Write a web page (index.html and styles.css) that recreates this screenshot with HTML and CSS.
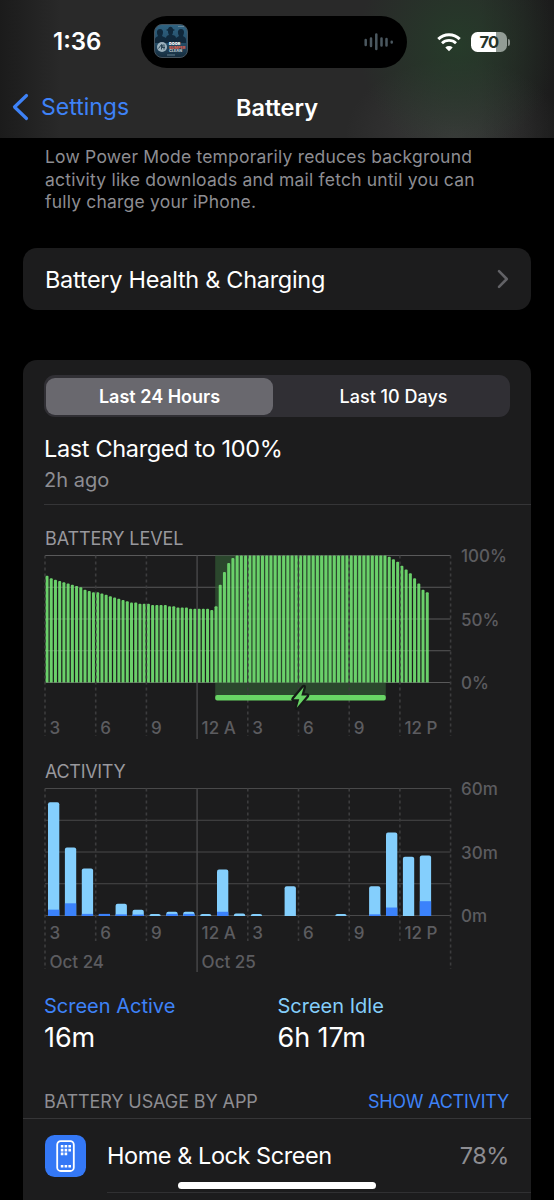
FILE: index.html
```html
<!DOCTYPE html>
<html lang="en">

<head>
    <meta charset="UTF-8">
    <meta name="viewport" content="width=device-width, initial-scale=1.0">
    <title>Battery</title>
    <link rel="stylesheet" href="styles.css">
</head>

<body>
    <div class="phone">
        <header class="header">
            <div class="status-bar">
                <div class="time">1:36</div>
                <div class="island">
                    <svg class="artwork" width="34" height="34" viewBox="0 0 34 34">
                        <defs>
                            <linearGradient id="art" x1="0" y1="0" x2="0" y2="1">
                                <stop offset="0" stop-color="#2f6382" />
                                <stop offset="0.6" stop-color="#244b65" />
                                <stop offset="1" stop-color="#152b3c" />
                            </linearGradient>
                        </defs>
                        <rect x="0.5" y="0.5" width="33" height="33" rx="7.5" fill="url(#art)" stroke="#45525c" />
                        <path d="M1 16c0-3 2-3 3-4-2-4-1-7 2-7s4 3 2 7c1 1 3 1 4 2 0-2 2-3 3-3-1-2-1-3-1-4l-2-1 2-1c1-3 4-3 5 0l2 1-2 1c0 1 0 3-1 4 2 0 4 1 4 3 1-1 2-1 3-2-2-4-1-7 2-7s4 3 2 7c1 1 3 1 3 4v3H1z" fill="#10283b" />
                        <circle cx="8" cy="23" r="5" fill="#9cb1bd" />
                        <path d="M4.500 24.500l3-4v5m1.500-5l-1 3h3m-1-3v5" fill="none" stroke="#2b4657" />
                        <text x="15" y="21.300" class="art-text" fill="#fff">DOOR</text>
                        <text x="15" y="24.600" class="art-text" fill="#d8604f">BUMPER</text>
                        <text x="15" y="27.800" class="art-text" fill="#aebdc6">CLEAN</text>
                        <path d="M24 2.500h6M13 31h8" stroke="#75909f" stroke-width="0.800" />
                    </svg>
                    <svg class="wave" width="30" height="18" viewBox="0 0 30 18">
                        <path d="M1.700 7v5M7 5.500v7.500M12.300 1.500v14.500M17.500 5.500v7M22.500 6v6.500M27.700 8.800v.6" stroke="#4b5860" stroke-width="2.500" stroke-linecap="round" />
                    </svg>
                </div>
                <div class="indicators">
                    <svg width="24" height="19" viewBox="0 0 24 19">
                        <path d="M1.300 6.100a15.300 15.300 0 0 1 21.400 0" fill="none" stroke="#fff" stroke-width="3" />
                        <path d="M5 10.200a10 10 0 0 1 14 0" fill="none" stroke="#fff" stroke-width="2.800" />
                        <path d="M12 18.300l-3.700-3.900a5.400 5.400 0 0 1 7.400 0z" fill="#fff" />
                    </svg>
                    <div class="battery"><span>70</span></div>
                    <div class="battery-cap"></div>
                </div>
            </div>
            <div class="nav-bar">
                <a class="back">
                    <svg width="18" height="28" viewBox="0 0 18 28">
                        <path d="M14.500 2.500L2.500 14l12 11.500" fill="none" stroke="#3e82f7" stroke-width="3.200" stroke-linecap="round" stroke-linejoin="round" />
                    </svg>
                    <span>Settings</span>
                </a>
                <h1>Battery</h1>
            </div>
        </header>

        <p class="footnote">Low Power Mode temporarily reduces background<br>activity like downloads and mail fetch until you can<br>fully charge your iPhone.</p>

        <div class="card health">
            <span>Battery Health &amp; Charging</span>
            <svg width="12" height="20" viewBox="0 0 12 20">
                <path d="M2 2.200l7.800 7.800L2 17.800" fill="none" stroke="#626266" stroke-width="2.600" stroke-linecap="round" stroke-linejoin="round" />
            </svg>
        </div>

        <div class="card usage">
            <div class="segmented">
                <div class="segment selected"><span>Last 24 Hours</span></div>
                <div class="segment"><span>Last 10 Days</span></div>
            </div>
            <div class="charged">
                <div class="charged-title">Last Charged to 100%</div>
                <div class="charged-sub">2h ago</div>
            </div>

            <h2 class="level-title">BATTERY LEVEL</h2>
            <svg id="levelChart" class="chart" width="486" height="194" viewBox="0 0 486 194"></svg>

            <h2 class="activity-title">ACTIVITY</h2>
            <svg id="activityChart" class="chart" width="486" height="194" viewBox="0 0 486 194"></svg>

            <div class="totals">
                <div class="total">
                    <div class="label active">Screen Active</div>
                    <div class="value">16m</div>
                </div>
                <div class="total">
                    <div class="label idle">Screen Idle</div>
                    <div class="value">6h 17m</div>
                </div>
            </div>

            <div class="list-head">
                <span>BATTERY USAGE BY APP</span>
                <a>SHOW ACTIVITY</a>
            </div>
            <div class="app">
                <svg width="41" height="42" viewBox="0 0 41 42">
                    <rect width="41" height="42" rx="9.500" fill="#3478f6" />
                    <rect x="12.200" y="6.200" width="16.600" height="29.800" rx="3.500" fill="none" stroke="#fff" stroke-width="1.800" />
                    <path d="M15.800 11.300h10.500M15.800 15.100h10.500M15.800 18.900h7M15.800 31.300h10.500" stroke="#fff" stroke-width="2.600" stroke-dasharray="2.600 1.200" />
                </svg>
                <div class="app-row">
                    <span class="app-name">Home &amp; Lock Screen</span>
                    <span class="app-percent">78%</span>
                </div>
            </div>
        </div>
        <div class="home-indicator"></div>
    </div>

    <script src="script.js"></script>
</body>

</html>
```
FILE: styles.css
```css
* {
    box-sizing: border-box;
}

body {
    margin: 0;
    background: #000;
    color: #fff;
    font-family: Inter, "Liberation Sans", sans-serif;
}

.phone {
    position: relative;
    width: 554px;
    height: 1200px;
    overflow: hidden;
}

.header {
    height: 138px;
    background:
        radial-gradient(ellipse 100px 110px at 458px 45px, rgba(37, 65, 42, 0.75), rgba(37, 65, 42, 0) 100%),
        radial-gradient(ellipse 110px 80px at 455px 138px, rgba(75, 75, 75, 0.5), rgba(75, 75, 75, 0) 100%),
        linear-gradient(90deg, #1b1b1b, #292929 60px, #292929 480px, #1b1b1b);
}

.status-bar {
    display: flex;
    padding-top: 16px;
    height: 77px;
}

.time {
    width: 141px;
    padding-left: 53px;
    font-size: 24px;
    font-weight: 600;
    line-height: 52px;
    letter-spacing: 0;
}

.island {
    display: flex;
    align-items: center;
    justify-content: space-between;
    width: 266px;
    height: 52px;
    padding: 0 13px;
    border-radius: 26px;
    background: #000;
}

.artwork {
    margin-top: -2px;
}

.art-text {
    font-size: 3.8px;
    font-weight: 900;
}

.indicators {
    display: flex;
    align-items: center;
    height: 52px;
    padding-left: 30px;
}

.battery {
    width: 36px;
    height: 20px;
    margin-left: 10px;
    border-radius: 6.5px;
    background: linear-gradient(90deg, #fff 70%, #929c95 70%);
    color: #26332a;
    font-size: 16.5px;
    font-weight: 700;
    line-height: 20px;
    text-align: center;
    letter-spacing: -0.8px;
}

.battery-cap {
    width: 2px;
    height: 7px;
    margin-left: 1px;
    border-radius: 0 2px 2px 0;
    background: #8a918c;
}

.nav-bar {
    display: grid;
    grid-template-columns: 1fr 140px 1fr;
    align-items: center;
    height: 60px;
}

.back {
    display: flex;
    align-items: center;
    gap: 11px;
    padding-left: 12px;
    color: #3e82f7;
    font-size: 23px;
    letter-spacing: 0;
}

h1 {
    margin: 0;
    font-size: 23.5px;
    font-weight: 600;
    text-align: center;
    letter-spacing: 0;
}

.footnote {
    height: 67px;
    margin: 8px 0 35px;
    padding-left: 45px;
    color: #8d8d92;
    font-size: 17.5px;
    line-height: 22.7px;
    letter-spacing: 0.2px;
}

.card {
    margin-left: 23px;
    width: 508px;
    background: #1c1c1d;
    border-radius: 14px;
}

.health {
    display: flex;
    align-items: center;
    justify-content: space-between;
    height: 62px;
    padding: 0 22px;
    font-size: 23.5px;
    letter-spacing: -0.3px;
}

.usage {
    height: 860px;
    margin-top: 50px;
    padding-top: 15px;
}

.segmented {
    display: flex;
    width: 466px;
    height: 42px;
    margin-left: 21px;
    padding: 2.5px 2px;
    border-radius: 11px;
    background: #302f34;
}

.segment {
    flex: 1;
    padding-left: 6px;
    border-radius: 9px;
    font-size: 18px;
    font-weight: 500;
    line-height: 37px;
    text-align: center;
}

.segment.selected {
    flex: 0 0 227px;
    padding-left: 0;
    background: #69686e;
    font-weight: 600;
}

.charged {
    height: 88px;
    margin-left: 21px;
    padding-top: 16px;
    border-bottom: 1px solid #353537;
}

.charged-title {
    font-size: 23.5px;
    line-height: 32px;
    letter-spacing: -0.35px;
}

.charged-sub {
    color: #8d8d92;
    font-size: 20px;
    line-height: 30px;
}

h2 {
    margin: 0 0 0 22px;
    color: #98989d;
    font-size: 18px;
    font-weight: 400;
    line-height: 24px;
    letter-spacing: -0.1px;
}

.level-title {
    margin-top: 22px;
}

.activity-title {
    margin-top: 15px;
    letter-spacing: -0.3px;
}

.chart {
    display: block;
    margin-left: 21px;
    overflow: visible;
}

.chart text {
    fill: #5c5c60;
    font-size: 17px;
    font-weight: 500;
}

.grid {
    stroke: #fff;
    stroke-opacity: 0.2;
    stroke-width: 1.2;
}

.tick {
    stroke: #3c3c3e;
    stroke-width: 1.6;
    stroke-dasharray: 3 3;
}

.midnight {
    stroke: #48484a;
    stroke-width: 1.4;
}

.totals {
    display: flex;
    margin: 14px 0 0 21px;
}

.total {
    width: 233.5px;
}

.label {
    font-size: 20px;
    line-height: 28px;
}

.label.active {
    color: #3e82f7;
}

.label.idle {
    color: #84cefb;
}

.value {
    font-size: 27px;
    line-height: 36px;
    letter-spacing: -0.1px;
}

.list-head {
    display: flex;
    justify-content: space-between;
    height: 63px;
    padding: 34px 22px 0 21px;
    border-bottom: 1px solid #353537;
    color: #8d8d92;
    font-size: 18px;
    line-height: 24px;
    letter-spacing: -0.1px;
}

.list-head a {
    color: #3e82f7;
    letter-spacing: -0.25px;
}

.app {
    display: flex;
    align-items: center;
    height: 74px;
    padding-left: 22px;
}

.app-row {
    display: flex;
    flex: 1;
    align-items: center;
    justify-content: space-between;
    height: 74px;
    margin-left: 21px;
    padding-right: 22px;
    border-bottom: 1px solid #303032;
    font-size: 23.5px;
    letter-spacing: -0.45px;
}

.app-percent {
    color: #8d8d92;
}

.home-indicator {
    position: absolute;
    left: 178px;
    bottom: 11px;
    width: 198px;
    height: 7px;
    border-radius: 4px;
    background: #fff;
}
```
FILE: script.js
```js
const LEFT = 1;
const TICK = 50.7;
const TOP = 4.5;
const HEIGHT = 127;
const BOTTOM = TOP + HEIGHT;
const RIGHT = LEFT + TICK * 8;
const hours = ['3', '6', '9', '12 A', '3', '6', '9', '12 P'];

// one value per 15 minutes
const levels = [
    84, 82, 81, 80, 79, 78, 77, 76, 75, 73, 72, 71, 71, 70, 69, 68, 67, 66, 65, 64,
    63, 63, 62, 62, 62, 61, 61, 61, 61, 60, 60, 59, 59, 59, 58, 58, 58, 58, 58, 57,
    60, 77, 87, 94, 98,
    ...Array(36).fill(100),
    99, 97, 95, 92, 89, 86, 82, 78, 73, 71
];

// [total, active] minutes for each hour
const activity = [
    [53.7, 3], [32.4, 6], [22.4, 1], [1, 1], [5.8, 0.8], [3, 0.7], [1, 0], [2, 1],
    [2, 1], [1, 0], [22, 2], [1.2, 0], [1, 0], [0, 0], [14, 0], [0, 0],
    [0, 0], [1, 0], [0, 0], [14, 0.8], [39.5, 4], [28, 0], [28.6, 7]
];

function line(x1, y1, x2, y2, cls) {
    return `<line x1="${x1}" y1="${y1}" x2="${x2}" y2="${y2}" class="${cls}"/>`;
}

function text(x, y, content) {
    return `<text x="${x}" y="${y}">${content}</text>`;
}

function gridLines() {
    let out = '';
    for (let i = 0; i <= 4; i++) {
        const y = TOP + i * HEIGHT / 4;
        out += line(LEFT, y, RIGHT, y, 'grid');
    }
    return out;
}

function scaleLabels(labels) {
    return labels.map((label, i) => text(417, TOP + 6.5 + i * HEIGHT / 2, label)).join('');
}

function hourLabels(y) {
    return hours.map((hour, i) => text(LEFT + i * TICK + 4.5, y, hour)).join('');
}

function topRounded(x, y, width, bottom, r, fill) {
    r = Math.min(r, bottom - y);
    return `<path d="M${x} ${bottom}V${y + r}q0 ${-r} ${r} ${-r}h${width - 2 * r}q${r} 0 ${r} ${r}V${bottom}z" fill="${fill}"/>`;
}

function drawLevel() {
    const chargeX = 171.2;
    const chargeW = 170.6;
    let out = gridLines();
    out += `<rect x="${chargeX}" y="${TOP}" width="${chargeW}" height="142" fill="#2b472d"/>`;
    levels.forEach((level, i) => {
        const x = LEFT + 0.5 + i * TICK / 12;
        out += topRounded(x, BOTTOM - level * HEIGHT / 100, 3, BOTTOM, 1, '#6ad06a');
    });
    out += `<g opacity="0.45">${gridLines()}</g>`;
    for (let i = 0; i <= 8; i++) {
        const x = LEFT + i * TICK;
        if (i === 3) {
            out += line(x, TOP, x, 188, 'midnight');
        } else {
            out += line(x, TOP, x, 185, 'tick');
        }
    }
    out += `<rect x="${chargeX}" y="144" width="${chargeW}" height="5.500" rx="2" fill="#68d565"/>`;
    out += '<path d="M259.800 136l-10.300 12.200h5.700l-2.400 8.600 10.300-12.300h-5.800z" fill="#68d565" stroke="#151a16" stroke-width="4.500" stroke-linejoin="round" paint-order="stroke"/>';
    out += hourLabels(182.5) + scaleLabels(['100%', '50%', '0%']);
    document.getElementById('levelChart').innerHTML = out;
}

function drawActivity() {
    let out = gridLines();
    for (let i = 0; i <= 8; i++) {
        const x = LEFT + i * TICK;
        if (i === 3) {
            out += line(x, TOP, x, 188, 'midnight');
        } else {
            out += line(x, TOP, x, i === 0 || i === 8 ? 185 : 157, 'tick');
        }
    }
    activity.forEach(([total, active], i) => {
        if (!total) return;
        const x = LEFT + 3 + i * TICK / 3;
        const base = BOTTOM + 0.5;
        const unit = HEIGHT / 60;
        const h = total * unit;
        out += topRounded(x, base - h, 11.3, base, 2, total === active ? '#3b82fb' : '#84cffd');
        if (active) {
            out += `<rect x="${x}" y="${base - active * unit}" width="11.300" height="${active * unit}" fill="#3b82fb"/>`;
        }
    });
    out += hourLabels(155) + text(5.5, 183.5, 'Oct 24') + text(157.6, 183.5, 'Oct 25');
    out += scaleLabels(['60m', '30m', '0m']);
    document.getElementById('activityChart').innerHTML = out;
}

drawLevel();
drawActivity();
```
